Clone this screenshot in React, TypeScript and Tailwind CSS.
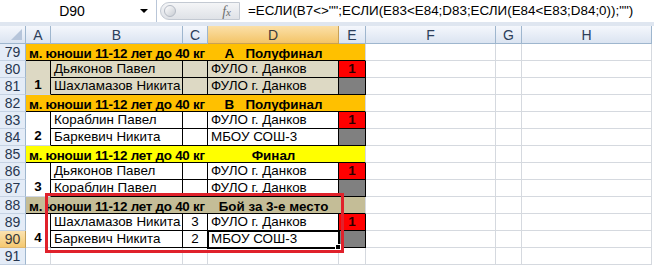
import React from "react"

const cols = "grid grid-cols-[26px_25px_132px_25px_131px_27px_130px_26px_130px]"

const sections = [
  {
    head: 79,
    bg: "bg-[#ffc000]",
    title: "А   Полуфинал",
    fill: "bg-[#ddd9c4]",
    place: "1",
    players: [
      { name: "Дьяконов Павел", score: "", school: "ФУЛО г. Данков" },
      { name: "Шахламазов Никита", score: "", school: "ФУЛО г. Данков" },
    ],
  },
  {
    head: 82,
    bg: "bg-[#ffc000]",
    title: "В   Полуфинал",
    fill: "bg-white",
    place: "2",
    players: [
      { name: "Кораблин Павел", score: "", school: "ФУЛО г. Данков" },
      { name: "Баркевич Никита", score: "", school: "МБОУ СОШ-3" },
    ],
  },
  {
    head: 85,
    bg: "bg-[#ffff00]",
    title: "Финал",
    fill: "bg-white",
    place: "3",
    players: [
      { name: "Дьяконов Павел", score: "", school: "ФУЛО г. Данков" },
      { name: "Кораблин Павел", score: "", school: "ФУЛО г. Данков" },
    ],
  },
  {
    head: 88,
    bg: "bg-[#c4bd97]",
    title: "Бой за 3-е место",
    fill: "bg-white",
    place: "4",
    players: [
      { name: "Шахламазов Никита", score: "3", school: "ФУЛО г. Данков" },
      { name: "Баркевич Никита", score: "2", school: "МБОУ СОШ-3" },
    ],
  },
]

const RowNum = ({ n, active = false }: { n: number; active?: boolean }) => (
  <div
    className={
      "h-[17px] flex items-center justify-center border-r border-b text-[14px] leading-none " +
      (active
        ? "bg-gradient-to-b from-[#fbe2b0] to-[#f5c970] border-r-[#c29e57] border-b-[#e0b870] text-[#3a3a3a]"
        : "bg-[#e4ecf7] border-r-[#9eb6ce] border-b-[#c5d2e3] text-[#27364f]")
    }
  >
    {n}
  </div>
)

const Blank = () => <div className="h-[17px] border-r border-b border-[#d5d9df] bg-white" />

const Rest = () => (
  <>
    <Blank />
    <Blank />
    <Blank />
  </>
)

const ColHead = ({ label, active = false }: { label: string; active?: boolean }) => (
  <div
    className={
      "h-[18px] flex items-center justify-center border-r border-b text-[14px] leading-none " +
      (active
        ? "bg-gradient-to-b from-[#fbe0a8] to-[#f3c466] border-[#c9a155] text-[#3b3b3b]"
        : "bg-gradient-to-b from-[#f4f7fc] to-[#dbe4f1] border-[#9eb6ce] text-[#2c3e5a]")
    }
  >
    {label}
  </div>
)

export default function App() {
  return (
    <div className="relative w-[654px] h-[266px] overflow-hidden bg-white font-['Liberation_Sans',Arial,sans-serif] text-black">
      {/* formula bar */}
      <div className="h-[26px] flex bg-[#dfe6f0]">
        <div className="w-[157px] h-[22px] bg-white border-r border-[#b9c6d8] flex items-center relative">
          <span className="w-full text-center text-[14px] pr-[16px] pl-[4px]">D90</span>
          <span className="absolute right-[8px] top-[9px] w-0 h-0 border-l-[4px] border-r-[4px] border-t-[4px] border-l-transparent border-r-transparent border-t-black" />
        </div>
        <div className="w-[85px] h-[22px] bg-white flex items-center">
          <div className="ml-[3px] w-[80px] h-[18px] rounded-l-full bg-gradient-to-b from-[#f4f5f7] to-[#dfe2e7] border border-[#c3c9d2] flex items-center">
            <span className="ml-[3px] w-[12px] h-[12px] rounded-full bg-gradient-to-br from-white to-[#c8ccd3] border border-[#b4bac4]" />
            <span className="ml-auto mr-[8px] font-['Liberation_Serif',serif] italic text-[14px] text-[#6e6e6e]">
              f<span className="text-[11px]">x</span>
            </span>
          </div>
        </div>
        <div className="flex-1 h-[22px] bg-white flex items-center pl-[6px] text-[13.4px] whitespace-pre">
          {'=ЕСЛИ(B7<>"";ЕСЛИ(E83<E84;D83;ЕСЛИ(E84<E83;D84;0));"")'}
        </div>
      </div>

      {/* sheet */}
      <div className={cols}>
        <div className="h-[18px] border-r border-b border-[#9eb6ce] bg-gradient-to-b from-[#f4f7fc] to-[#dbe4f1] relative">
          <span className="absolute right-[3px] bottom-[3px] w-0 h-0 border-b-[11px] border-l-[11px] border-b-[#b6c5da] border-l-transparent" />
        </div>
        <ColHead label="A" />
        <ColHead label="B" />
        <ColHead label="C" />
        <ColHead label="D" active />
        <ColHead label="E" />
        <ColHead label="F" />
        <ColHead label="G" />
        <ColHead label="H" />

        {sections.map((s) => (
          <React.Fragment key={s.head}>
            <RowNum n={s.head} />
            <div className={"col-span-5 h-[17px] border-b border-black border-r border-r-[#d5d9df] grid grid-cols-[182px_131px_27px] items-center text-[13.4px] font-bold whitespace-pre " + s.bg}>
              <span className="pl-[3px] tracking-[-0.25px]">м. юноши 11-12 лет до 40 кг</span>
              <span className="text-center">{s.title}</span>
              <span />
            </div>
            <Rest />

            <RowNum n={s.head + 1} />
            <div className={"row-span-2 border-r border-r-black border-b border-b-[#d0d7e5] flex items-end justify-center pb-[1px] text-[13.4px] font-bold leading-[16px] " + s.fill}>
              {s.place}
            </div>
            {s.players.map((p, i) => (
              <React.Fragment key={i}>
                {i === 1 && <RowNum n={s.head + 2} active={s.head + 2 === 90} />}
                <div className={"h-[17px] border-r border-b border-black flex items-center pl-[3px] text-[13.4px] whitespace-nowrap " + s.fill}>
                  {p.name}
                </div>
                <div className={"h-[17px] border-r border-b border-black flex items-center justify-center text-[13.4px] " + s.fill}>
                  {p.score}
                </div>
                <div className={"h-[17px] border-r border-b border-black flex items-center pl-[3px] text-[13.4px] whitespace-nowrap " + s.fill}>
                  {p.school}
                </div>
                <div
                  className={
                    "h-[17px] border-r border-b border-black flex items-center justify-center text-[13.4px] font-bold text-[#2a0000] " +
                    (i === 0 ? "bg-[#ff0000]" : "bg-[#808080]")
                  }
                >
                  {i === 0 ? "1" : ""}
                </div>
                <Rest />
              </React.Fragment>
            ))}
          </React.Fragment>
        ))}

        <RowNum n={91} />
        {Array.from({ length: 8 }).map((_, i) => (
          <Blank key={i} />
        ))}
      </div>

      {/* active cell D90 */}
      <div className="absolute left-[207px] top-[230px] w-[133px] h-[19px] border-2 border-black" />
      <div className="absolute left-[335px] top-[244px] w-[6px] h-[6px] bg-black border border-white" />

      {/* red highlight */}
      <div className="absolute left-[45px] top-[193px] w-[299px] h-[60px] border-[3px] border-[#e0212b]" />
    </div>
  )
}
